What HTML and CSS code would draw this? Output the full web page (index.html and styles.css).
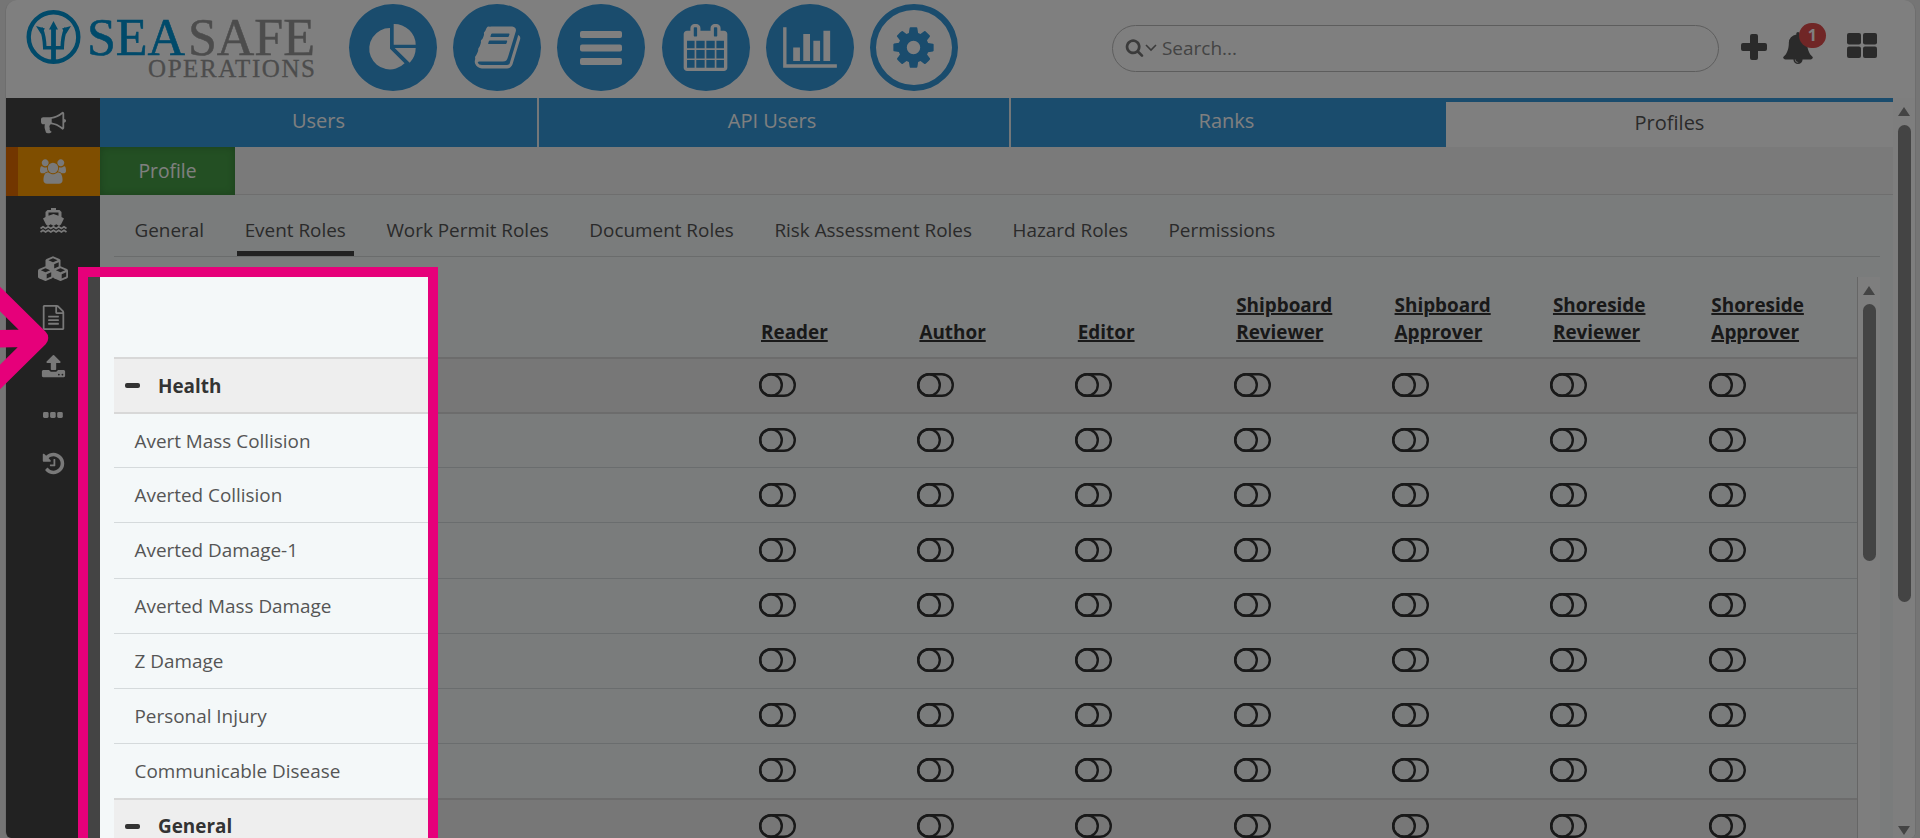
FILE: index.html
```html
<!DOCTYPE html>
<html lang="en">
<head>
    <meta charset="utf-8">
    <title>SeaSafe Operations - Profiles</title>
    <link rel="stylesheet" href="styles.css">
</head>
<body>
    <div class="app">
        <header class="header">
            <svg class="logo" width="300" height="84" viewBox="0 0 300 84">
                <circle cx="27.500" cy="27" r="24.800" fill="none" stroke="#0094d4" stroke-width="4.400"/>
                <g fill="none" stroke="#0094d4" stroke-width="3.600">
                    <path d="M27.500 17V52" stroke-width="4.800"/>
                    <path d="M15 18q3.500 8 3.800 19.800h17.400q.3-11.800 3.800-19.800"/>
                </g>
                <path d="M27.500 11l4.500 8.500h-9zM10 16l9 2.500-4 5.500zM45 16l-9 2.500 4 5.500z" fill="#0094d4"/>
                <text class="logo-name" y="44.500"><tspan class="logo-sea" x="61" textLength="98">SEA</tspan><tspan class="logo-safe" x="162" textLength="127">SAFE</tspan></text>
                <text class="logo-sub" x="122" y="67" textLength="167">OPERATIONS</text>
            </svg>
            <nav class="main-nav">
                <a class="circle"><svg width="88" height="88" viewBox="0 0 88 88"><path d="M41 44.700V24A20.700 20.700 0 1 0 55.600 59.300ZM44.700 40.700V20A21.500 20.700 0 0 1 66.700 40.700ZM45.700 44H66.700A21 21 0 0 1 60.700 58.700Z"/></svg></a>
                <a class="circle"><svg width="49" height="49" viewBox="0 0 1792 1792"><path d="M1703 478q40 57 18 129l-275 906q-19 64-76.5 107.5t-122.5 43.5h-923q-77 0-148.5-53.5t-99.5-131.5q-24-67-2-127 0-4 3-27t4-37q1-8-3-21.5t-3-19.5q2-11 8-21t16.5-23.5 16.5-23.5q23-38 45-91.5t30-91.5q3-10 .5-30t-.5-28q3-11 17-28t17-23q21-36 42-92t25-90q1-9-2.5-32t.5-28q4-13 22-30.5t22-22.5q19-26 42.5-84.5t27.5-96.5q1-8-3-25.5t-2-26.5q2-8 9-18t18-23 17-21q8-12 16.5-30.5t15-35 16-36 19.5-32 26.5-23.5 36-11.5 47.5 5.5l-1 3q38-9 51-9h761q74 0 114 56t18 130l-274 906q-36 119-71.5 153.5t-128.5 34.5h-869q-27 0-38 15-11 16-1 43 24 70 144 70h923q29 0 56-15.5t35-41.5l300-987q7-22 5-57 38 15 59 43zm-1064 2q-4 13 2 22.5t20 9.5h608q13 0 25.5-9.5t16.5-22.5l21-64q4-13-2-22.5t-20-9.5h-608q-13 0-25.5 9.5t-16.5 22.5zm-83 256q-4 13 2 22.5t20 9.5h608q13 0 25.5-9.5t16.5-22.5l21-64q4-13-2-22.5t-20-9.5h-608q-13 0-25.5 9.5t-16.5 22.5z"/></svg></a>
                <a class="circle"><svg width="42" height="34" viewBox="0 0 42 34"><rect width="42" height="7" rx="2"/><rect y="13.500" width="42" height="7" rx="2"/><rect y="27" width="42" height="7" rx="2"/></svg></a>
                <a class="circle"><svg width="47" height="47" viewBox="0 0 1792 1792"><path d="M192 1664h288v-288h-288v288zm352 0h320v-288h-320v288zm-352-352h288v-320h-288v320zm352 0h320v-320h-320v320zm-352-384h288v-288h-288v288zm736 736h320v-288h-320v288zm-384-736h320v-288h-320v288zm768 736h288v-288h-288v288zm-384-352h320v-320h-320v320zm-352-864v-288q0-13-9.5-22.5t-22.5-9.5h-64q-13 0-22.5 9.5t-9.5 22.5v288q0 13 9.5 22.5t22.5 9.5h64q13 0 22.5-9.5t9.5-22.5zm736 864h288v-320h-288v320zm-384-384h320v-288h-320v288zm384 0h288v-288h-288v288zm32-480v-288q0-13-9.5-22.5t-22.5-9.5h-64q-13 0-22.5 9.5t-9.5 22.5v288q0 13 9.5 22.5t22.5 9.5h64q13 0 22.5-9.5t9.5-22.5zm384-64v1280q0 52-38 90t-90 38h-1408q-52 0-90-38t-38-90v-1280q0-52 38-90t90-38h128v-96q0-66 47-113t113-47h64q66 0 113 47t47 113v96h384v-96q0-66 47-113t113-47h64q66 0 113 47t47 113v96h128q52 0 90 38t38 90z"/></svg></a>
                <a class="circle"><svg width="54" height="47" viewBox="0 0 2048 1792"><path d="M640 896v512h-256v-512h256zm384-512v1024h-256v-1024h256zm1024 1152v128h-2048v-1536h128v1408h1920zm-640-896v768h-256v-768h256zm384-384v1152h-256v-1152h256z"/></svg></a>
                <a class="circle active"><svg width="47" height="47" viewBox="0 0 1792 1792"><path d="M1152 896q0-106-75-181t-181-75-181 75-75 181 75 181 181 75 181-75 75-181zm512-109v222q0 12-8 23t-20 13l-185 28q-19 54-39 91 35 50 107 138 10 12 10 25t-9 23q-27 37-99 108t-94 71q-12 0-26-9l-138-108q-44 23-91 38-16 136-29 186-7 28-36 28h-222q-14 0-24.5-8.5t-11.5-21.5l-28-184q-49-16-90-37l-141 107q-10 9-25 9-14 0-25-11-126-114-165-168-7-10-7-23 0-12 8-23 15-21 51-66.5t54-70.5q-27-50-41-99l-183-27q-13-2-21-12.5t-8-23.5v-222q0-12 8-23t19-13l186-28q14-46 39-92-40-57-107-138-10-12-10-24 0-10 9-23 26-36 98.5-107.5t94.5-71.5q13 0 26 10l138 107q44-23 91-38 16-136 29-186 7-28 36-28h222q14 0 24.5 8.5t11.5 21.5l28 184q49 16 90 37l142-107q9-9 24-9 13 0 25 10 129 119 165 170 7 8 7 22 0 12-8 23-15 21-51 66.5t-54 70.5q26 50 41 98l183 28q13 2 21 12.5t8 23.5z"/></svg></a>
            </nav>
            <div class="search">
                <svg width="19" height="19" viewBox="0 0 1792 1792"><path fill="#777" d="M1216 832q0-185-131.5-316.5t-316.5-131.5-316.5 131.5-131.5 316.5 131.5 316.5 316.5 131.5 316.5-131.5 131.5-316.5zm512 832q0 52-38 90t-90 38q-54 0-90-38l-343-342q-179 124-399 124-143 0-273.5-55.5t-225-150-150-225-55.5-273.5 55.5-273.5 150-225 225-150 273.5-55.5 273.5 55.5 225 150 150 225 55.5 273.5q0 220-124 399l343 343q37 37 37 90z"/></svg>
                <svg width="12" height="8" viewBox="0 0 12 8"><path d="M1 1l5 5 5-5" fill="none" stroke="#777" stroke-width="1.600"/></svg>
                <span>Search...</span>
            </div>
            <div class="tools">
                <svg width="26" height="26" viewBox="0 0 26 26"><path d="M11 0h4q2 0 2 2v7h7q2 0 2 2v4q0 2-2 2h-7v7q0 2-2 2h-4q-2 0-2-2v-7h-7q-2 0-2-2v-4q0-2 2-2h7v-7q0-2 2-2z"/></svg>
                <div class="bell">
                    <svg width="32" height="32" viewBox="0 0 1792 1792"><path d="M912 1696q0-16-16-16-59 0-101.5-42.5t-42.5-101.5q0-16-16-16t-16 16q0 73 51.5 124.5t124.5 51.5q16 0 16-16zm816-288q0 52-38 90t-90 38h-448q0 106-75 181t-181 75-181-75-75-181h-448q-52 0-90-38t-38-90q50-42 91-88t85-119.5 74.5-158.5 50-206 19.5-260q0-152 117-282.5t307-158.5q-8-19-8-39 0-40 28-68t68-28 68 28 28 68q0 20-8 39 190 28 307 158.5t117 282.5q0 139 19.5 260t50 206 74.5 158.5 85 119.5 91 88z"/></svg>
                    <span class="badge">1</span>
                </div>
                <svg class="grid-icon" width="30" height="25" viewBox="0 0 30 25"><rect width="14" height="11.500" rx="2"/><rect x="16" width="14" height="11.500" rx="2"/><rect y="13.500" width="14" height="11.500" rx="2"/><rect x="16" y="13.500" width="14" height="11.500" rx="2"/></svg>
            </div>
        </header>

        <div class="main">
            <aside class="sidebar">
                <a><svg width="25" height="25" viewBox="0 0 1792 1792"><path d="M1664 640q53 0 90.5 37.5t37.5 90.5-37.5 90.5-90.5 37.5v384q0 52-38 90t-90 38q-417-347-812-380-58 19-91 66t-31 100.5 40 92.5q-20 33-23 65.5t6 58 33.5 55 48 50 61.5 50.5q-29 58-111.5 83t-168.5 11.5-132-55.5q-7-23-29.5-87.5t-32-94.5-23-89-15-101 3.5-98.5 22-110.5h-122q-66 0-113-47t-47-113v-192q0-66 47-113t113-47h480q435 0 896-384 52 0 90 38t38 90v384zm-128 604v-954q-394 302-768 343v270q377 42 768 341z"/></svg></a>
                <a class="active"><svg width="26" height="25" viewBox="0 0 1920 1792"><path d="M593 896q-162 5-265 128h-134q-82 0-138-40.5t-56-118.5q0-353 124-353 6 0 43.5 21t97.5 42.5 119 21.5q67 0 133-23-5 37-5 66 0 139 81 256zm1071 637q0 120-73 189.5t-194 69.5h-874q-121 0-194-69.5t-73-189.5q0-53 3.5-103.5t14-109 26.5-108.5 43-97.5 62-81 85.5-53.5 111.5-20q10 0 43 21.5t73 48 107 48 135 21.5 135-21.5 107-48 73-48 43-21.5q61 0 111.5 20t85.5 53.5 62 81 43 97.5 26.5 108.5 14 109 3.5 103.5zm-1024-1277q0 106-75 181t-181 75-181-75-75-181 75-181 181-75 181 75 75 181zm704 384q0 159-112.5 271.5t-271.5 112.5-271.5-112.5-112.5-271.5 112.5-271.5 271.5-112.5 271.5 112.5 112.5 271.5zm576 225q0 78-56 118.5t-138 40.5h-134q-103-123-265-128 81-117 81-256 0-29-5-66 66 23 133 23 59 0 119-21.5t97.5-42.5 43.5-21q124 0 124 353zm-128-609q0 106-75 181t-181 75-181-75-75-181 75-181 181-75 181 75 75 181z"/></svg></a>
                <a><svg class="ship" width="27" height="25" viewBox="0 0 27 25"><path d="M11 0h5v2h3.500l2 2v5l2.500 1.500-3 6-2 1.500-2.700-1.700-2.800 1.700-2.800-1.700-2.700 1.700-2-1.500-3-6 2.500-1.500v-5l2-2h3.500zM8.500 4.500v3.300l5-1.800 5 1.800v-3.300z"/><path d="M.5 20.500l2.500-1.800 2.600 1.800 2.600-1.800 2.600 1.800 2.700-1.800 2.600 1.800 2.600-1.800 2.700 1.800 2.600-1.800 2.500 1.800M.5 24l2.500-1.800 2.600 1.800 2.600-1.800 2.600 1.800 2.700-1.800 2.600 1.800 2.600-1.800 2.700 1.800 2.600-1.800 2.500 1.800" fill="none" stroke="#f2f2f2" stroke-width="1.700"/></svg></a>
                <a><svg width="30" height="25" viewBox="0 0 30 25"><g id="cube"><path d="M15 .3l6.500 2.800q1 .5 1 1.500v6.200q0 1-1 1.500l-6.500 2.800-6.500-2.800q-1-.5-1-1.500v-6.200q0-1 1-1.500z"/><path d="M15 2.300l4.600 2-4.600 2-4.600-2zM16.200 8.200l4.500-2v4.400l-4.500 2z" fill="#444"/></g><use href="#cube" x="-7.500" y="10"/><use href="#cube" x="7.500" y="10"/></svg></a>
                <a><svg width="25" height="25" viewBox="0 0 1792 1792"><path d="M1596 380q28 28 48 76t20 88v1152q0 40-28 68t-68 28h-1344q-40 0-68-28t-28-68v-1600q0-40 28-68t68-28h896q40 0 88 20t76 48zm-444-244v376h376q-10-29-22-41l-313-313q-12-12-41-22zm384 1528v-1024h-416q-40 0-68-28t-28-68v-416h-768v1536h1280zm-1024-864q0-14 9-23t23-9h704q14 0 23 9t9 23v64q0 14-9 23t-23 9h-704q-14 0-23-9t-9-23v-64zm736 224q14 0 23 9t9 23v64q0 14-9 23t-23 9h-704q-14 0-23-9t-9-23v-64q0-14 9-23t23-9h704zm0 256q14 0 23 9t9 23v64q0 14-9 23t-23 9h-704q-14 0-23-9t-9-23v-64q0-14 9-23t23-9h704z"/></svg></a>
                <a><svg width="25" height="25" viewBox="0 0 1792 1792"><path d="M1344 1472q0-26-19-45t-45-19-45 19-19 45 19 45 45 19 45-19 19-45zm256 0q0-26-19-45t-45-19-45 19-19 45 19 45 45 19 45-19 19-45zm128-224v320q0 40-28 68t-68 28h-1472q-40 0-68-28t-28-68v-320q0-40 28-68t68-28h427q21 56 70.5 92t110.5 36h256q61 0 110.5-36t70.5-92h427q40 0 68 28t28 68zm-325-648q-17 40-59 40h-256v448q0 26-19 45t-45 19h-256q-26 0-45-19t-19-45v-448h-256q-42 0-59-40-17-39 14-69l448-448q18-19 45-19t45 19l448 448q31 30 14 69z"/></svg></a>
                <a><svg width="20" height="6" viewBox="0 0 20 6"><rect width="5.600" height="6" rx="1.400"/><rect x="7.100" width="5.600" height="6" rx="1.400"/><rect x="14.200" width="5.600" height="6" rx="1.400"/></svg></a>
                <a><svg width="25" height="25" viewBox="0 0 1792 1792"><path d="M1664 896q0 156-61 298t-164 245-245 164-298 61q-172 0-327-72.5t-264-204.5q-7-10-6.5-22.5t8.5-20.5l137-138q10-9 25-9 16 2 23 12 73 95 179 147t225 52q104 0 198.5-40.5t163.5-109.5 109.5-163.5 40.5-198.5-40.5-198.5-109.5-163.5-163.5-109.5-198.5-40.5q-98 0-188 35.5t-160 101.5l137 138q31 30 14 69-17 40-59 40h-448q-26 0-45-19t-19-45v-448q0-42 40-59 39-17 69 14l130 129q107-101 244.5-156.5t284.5-55.5q156 0 298 61t245 164 164 245 61 298zm-640-288v448q0 14-9 23t-23 9h-320q-14 0-23-9t-9-23v-64q0-14 9-23t23-9h224v-352q0-14 9-23t23-9h64q14 0 23 9t9 23z"/></svg></a>
            </aside>

            <div class="content">
                <div class="tabs">
                    <a>Users</a>
                    <a>API Users</a>
                    <a>Ranks</a>
                    <a class="active">Profiles</a>
                </div>
                <div class="subbar"><a>Profile</a></div>
                <div class="page">
                    <div class="role-tabs">
                        <a>General</a>
                        <a class="active">Event Roles</a>
                        <a>Work Permit Roles</a>
                        <a>Document Roles</a>
                        <a>Risk Assessment Roles</a>
                        <a>Hazard Roles</a>
                        <a>Permissions</a>
                    </div>
                    <div class="table-wrap">
                        <div class="table" id="roles">
                            <div class="row head">
                                <span></span>
                                <span><u>Reader</u></span>
                                <span><u>Author</u></span>
                                <span><u>Editor</u></span>
                                <span><u>Shipboard Reviewer</u></span>
                                <span><u>Shipboard Approver</u></span>
                                <span><u>Shoreside Reviewer</u></span>
                                <span><u>Shoreside Approver</u></span>
                            </div>
                        </div>
                        <div class="scrollbar inner">
                            <i class="up"></i>
                            <i class="thumb"></i>
                        </div>
                    </div>
                </div>
            </div>

            <div class="scrollbar outer">
                <i class="up"></i>
                <i class="thumb"></i>
                <i class="down"></i>
            </div>
        </div>
    </div>

    <!-- tutorial highlight -->
    <div class="spotlight"></div>
    <svg class="arrow" width="60" height="120" viewBox="0 0 60 120"><path d="M-30 -8.500L39.500 60L-30 128.500M39.500 60L-10 61" fill="none" stroke="#e6007a" stroke-width="17.500" stroke-linejoin="round"/></svg>

    <script>
        const rows = [
            { name: 'Health', group: true },
            { name: 'Avert Mass Collision' },
            { name: 'Averted Collision' },
            { name: 'Averted Damage-1' },
            { name: 'Averted Mass Damage' },
            { name: 'Z Damage' },
            { name: 'Personal Injury' },
            { name: 'Communicable Disease' },
            { name: 'General', group: true }
        ];
        const table = document.getElementById('roles');
        const toggle = '<span><svg class="toggle" width="37" height="24" viewBox="0 0 37 24">' +
            '<rect x="1.200" y="1.200" width="34.600" height="21.600" rx="10.800"/><circle cx="12" cy="12" r="10.800"/></svg></span>';

        rows.forEach(row => {
            const el = document.createElement('div');
            el.className = row.group ? 'row group' : 'row';
            el.innerHTML = `<span class="name">${row.name}</span>` + toggle.repeat(7);
            table.appendChild(el);
        });
    </script>
</body>
</html>
```
FILE: styles.css
```css
* {
    box-sizing: border-box;
}
body {
    margin: 0;
    height: 838px;
    overflow: hidden;
    position: relative;
    background: #ebebeb;
    color: #555;
    font-family: "Open Sans", sans-serif;
    font-size: 18.9px;
}
svg {
    display: block;
    flex: none;
}
.app {
    display: flex;
    flex-direction: column;
    height: 838px;
    margin: 0 4px 0 5px;
    background: #fff;
    border: 1px solid #ddd;
    border-width: 0 1px;
    border-radius: 12px 12px 6px 6px;
    overflow: hidden;
}

/* header */
.header {
    display: flex;
    height: 98px;
    flex: none;
}
.logo {
    margin: 10px 0 0 20px;
    overflow: visible;
}
.logo-name, .logo-sub {
    font-family: "Liberation Serif", serif;
}
.logo-name {
    font-size: 52px;
}
.logo-sea {
    fill: #0094d4;
    stroke: #0094d4;
    stroke-width: .6px;
}
.logo-safe, .logo-sub {
    fill: #999;
    stroke: #999;
    stroke-width: .5px;
}
.logo-sub {
    font-size: 25px;
    stroke-width: .3px;
}
.main-nav {
    display: flex;
    gap: 16.2px;
    padding-top: 4px;
    margin-left: 23px;
}
.circle {
    display: flex;
    align-items: center;
    justify-content: center;
    width: 88px;
    height: 87px;
    border-radius: 50%;
    background: #3498db;
    fill: #fff;
}
.circle.active {
    background: #fff;
    border: 6px solid #3498db;
    fill: #3498db;
}
.search {
    display: flex;
    align-items: center;
    width: 607px;
    height: 47px;
    margin: 25px 0 0 154px;
    padding-left: 12px;
    border: 1px solid #bbb;
    border-radius: 24px;
    color: #888;
    font-size: 19px;
}
.search svg {
    margin-top: -3px;
}
.search svg + svg {
    margin: -2px 5px 0 1px;
}
.search span {
    margin-top: -2px;
}
.tools {
    display: flex;
    align-items: flex-start;
    padding: 32px 0 0 22px;
    fill: #555;
}
.tools > svg:first-child {
    margin: 2px 15px 0 0;
}
.bell {
    position: relative;
    width: 32px;
}
.badge {
    position: absolute;
    left: 17px;
    top: -9px;
    width: 27px;
    height: 25px;
    border-radius: 13px;
    background: #e04c4c;
    color: #fff;
    font-size: 16px;
    font-weight: bold;
    line-height: 24px;
    text-align: center;
}
.tools .grid-icon {
    margin: 1px 0 0 33px;
}

/* body */
.main {
    display: flex;
    flex: 1;
    min-height: 0;
}
.sidebar {
    width: 94px;
    flex: none;
    background: #444;
    fill: #f2f2f2;
}
.sidebar a {
    display: flex;
    align-items: center;
    justify-content: center;
    height: 48.8px;
}
.sidebar a.active {
    background: #ff9d00;
    border-left: 12px solid #e46c00;
    padding-right: 12px;
}
.ship {
    margin-top: 2px;
}
.content {
    display: flex;
    flex-direction: column;
    width: 1793px;
    flex: none;
}
.tabs {
    display: grid;
    grid-template-columns: 437px 470px 435px 1fr;
    gap: 2px;
    height: 49px;
    flex: none;
    background: #e8eef2;
    font-size: 20px;
}
.tabs a {
    padding: 9px 4px 0 0;
    background: #3498db;
    color: #fff;
    line-height: 27px;
    text-align: center;
}
.tabs a:first-child {
    padding-right: 0;
}
.tabs a.active {
    margin-left: -2px;
    padding: 7px 0 0;
    background: #fff;
    border-top: 4px solid #3498db;
    color: #555;
}
.subbar {
    height: 48px;
    flex: none;
    background: #f5f5f5;
    border-bottom: 1px solid #ddd;
}
.subbar a {
    display: block;
    width: 135px;
    height: 48px;
    background: #469f46;
    box-shadow: inset 0 0 8px rgba(0, 0, 0, .2);
    color: #fff;
    font-size: 19.3px;
    line-height: 48px;
    text-align: center;
}
.page {
    display: flex;
    flex-direction: column;
    flex: 1;
    min-height: 0;
    padding: 0 13px 0 14px;
    background: #f4f8f9;
}
.role-tabs {
    display: flex;
    gap: 24.6px;
    height: 62px;
    flex: none;
    padding-left: 12.5px;
    border-bottom: 1px solid #d5d8d9;
}
.role-tabs a {
    height: 61px;
    padding: 0 8px;
    line-height: 70px;
}
.role-tabs a.active {
    border-bottom: 5px solid #444;
}
.table-wrap {
    display: flex;
    flex: 1;
    min-height: 0;
    margin-top: 20px;
}
.table {
    width: 1743px;
    overflow: hidden;
}
.row {
    display: grid;
    grid-template-columns: 634px repeat(7, 158.4px);
    align-items: center;
    height: 55.08px;
    border-top: 1px solid #d5dadc;
}
.row.head {
    height: 80.2px;
    align-items: end;
    padding-bottom: 11px;
    border-top: 0;
    color: #333;
    font-weight: bold;
    line-height: 27px;
}
.head span {
    padding: 0 40px 0 13px;
}
.head u {
    text-decoration-thickness: 1.5px;
}
.row.group, .row.group + .row {
    border-top: 2px solid #d8d8d8;
}
.row.group {
    background: #eee;
    color: #333;
    font-weight: bold;
}
.name {
    padding-left: 20.5px;
}
.group .name {
    display: flex;
    align-items: center;
    padding-left: 11px;
}
.group .name::before {
    content: "";
    width: 15px;
    height: 5px;
    margin-right: 18px;
    border-radius: 2px;
    background: #333;
}
.toggle {
    margin: -1.5px 0 0 10.5px;
    fill: none;
    stroke: #333;
    stroke-width: 2.4px;
}

/* scrollbars */
.scrollbar {
    display: flex;
    flex-direction: column;
    align-items: center;
    background: #fdfdfd;
}
.scrollbar.inner {
    width: 23px;
    border-left: 1px solid #ccc;
    padding-top: 9px;
}
.scrollbar.outer {
    flex: 1;
    padding: 9px 0 3px;
}
.up, .down {
    border: 6px solid transparent;
}
.up {
    border-top: 0;
    border-bottom: 9px solid #888;
}
.down {
    border-bottom: 0;
    border-top: 9px solid #888;
    margin-top: auto;
}
.thumb {
    width: 13px;
    height: 257px;
    margin-top: 9px;
    border-radius: 7px;
    background: #888;
}
.outer .thumb {
    height: 477px;
}

/* everything around the highlighted box is dimmed */
.spotlight {
    position: absolute;
    left: 78px;
    top: 267px;
    width: 360px;
    height: 600px;
    border: 10px solid #e6007a;
    box-shadow: 0 0 0 2000px rgba(0, 0, 0, .5);
}
.arrow {
    position: absolute;
    left: 0;
    top: 278px;
}
```
